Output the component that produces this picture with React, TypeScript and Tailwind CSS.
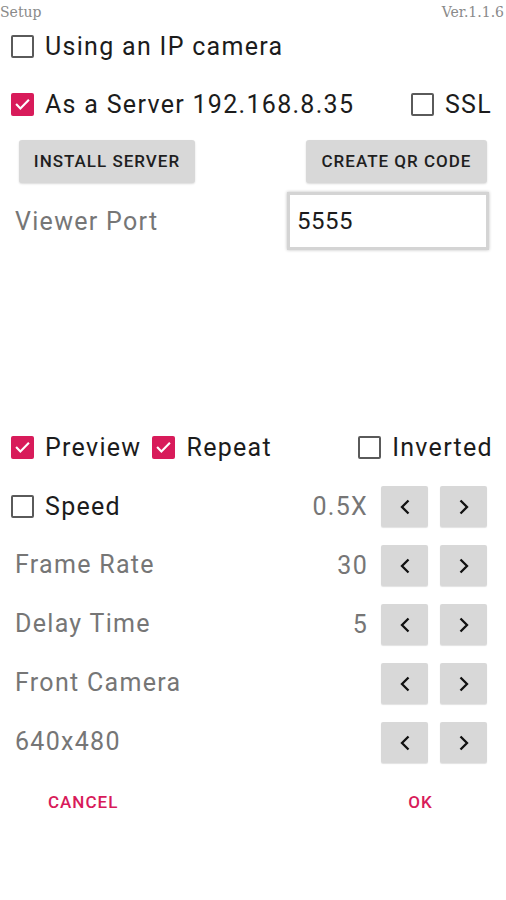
import React from "react";

const PINK = "bg-[#d81b5a]";

function Box({ checked }: { checked?: boolean }) {
  if (checked) {
    return (
      <span className={`flex h-[23px] w-[23px] shrink-0 items-center justify-center rounded-[2px] ${PINK}`}>
        <svg width="17" height="17" viewBox="0 0 24 24" fill="none">
          <path d="M4 12.5l5 5L20 6.5" stroke="#fff" strokeWidth="3" strokeLinecap="square" />
        </svg>
      </span>
    );
  }
  return <span className="h-[23px] w-[23px] shrink-0 rounded-[2px] border-2 border-[#5a5a5a]" />;
}

function Check({ label, checked }: { label: string; checked?: boolean }) {
  return (
    <div className="flex items-center gap-[11px]">
      <Box checked={checked} />
      <span className="text-[25px] leading-none tracking-[1.3px] text-[#1c1c1c]">{label}</span>
    </div>
  );
}

function Arrow({ dir }: { dir: "l" | "r" }) {
  return (
    <button className="flex h-[41px] w-[47px] items-center justify-center rounded-[2px] bg-[#d8d8d8] shadow-[0_1px_1px_rgba(0,0,0,0.12)]">
      <svg width="12" height="18" viewBox="0 0 12 18" fill="none">
        <path
          d={dir === "l" ? "M9.5 2.5L3 9l6.5 6.5" : "M2.5 2.5L9 9l-6.5 6.5"}
          stroke="#111"
          strokeWidth="2.3"
        />
      </svg>
    </button>
  );
}

function Stepper({ label, value, check }: { label: string; value?: string; check?: boolean }) {
  return (
    <div className="flex h-[59px] items-center">
      <div className="flex-1">
        {check ? (
          <Check label={label} />
        ) : (
          <span className="pl-[4px] text-[25px] leading-none tracking-[1.3px] text-[#767676]">{label}</span>
        )}
      </div>
      <span className="mr-[13px] text-[25px] leading-none tracking-[1.3px] text-[#767676]">{value}</span>
      <div className="flex gap-[12px]">
        <Arrow dir="l" />
        <Arrow dir="r" />
      </div>
    </div>
  );
}

export default function App() {
  return (
    <div
      className="h-[900px] w-[506px] bg-white pr-[19px] pl-[11px]"
      style={{ fontFamily: "Roboto, 'Noto Sans', sans-serif" }}
    >
      <div className="-mr-[17px] -ml-[11px] flex h-[24px] items-center justify-between text-[14px] text-[#8a8a8a] [font-family:'DejaVu_Serif',serif]">
        <span>Setup</span>
        <span>Ver.1.1.6</span>
      </div>

      <div className="flex h-[45px] items-center">
        <Check label="Using an IP camera" />
      </div>

      <div className="mt-[13px] flex h-[45px] items-center justify-between">
        <Check label="As a Server 192.168.8.35" checked />
        <div className="-mr-[5px]">
          <Check label="SSL" />
        </div>
      </div>

      <div className="mt-[13px] flex items-center justify-between pl-[8px]">
        <button className="h-[43px] w-[176px] rounded-[3px] bg-[#d8d8d8] text-[17px] font-medium tracking-[1px] text-[#1f1f1f] shadow-[0_1px_2px_rgba(0,0,0,0.15)]">
          INSTALL SERVER
        </button>
        <button className="h-[43px] w-[181px] rounded-[3px] bg-[#d8d8d8] text-[17px] font-medium tracking-[1px] text-[#1f1f1f] shadow-[0_1px_2px_rgba(0,0,0,0.15)]">
          CREATE QR CODE
        </button>
      </div>

      <div className="mt-[9px] flex h-[58px] items-center justify-between">
        <span className="pl-[4px] text-[25px] leading-none tracking-[1.3px] text-[#767676]">Viewer Port</span>
        <div className="-mr-[2px] flex h-[58px] w-[202px] items-center border-[3px] border-[#d4d4d4] bg-white pl-[7px] text-[24px] tracking-[0.5px] text-[#1c1c1c] shadow-[0_0_3px_rgba(0,0,0,0.25)]">
          5555
        </div>
      </div>

      <div className="mt-[175px] flex h-[45px] items-center justify-between">
        <div className="flex items-center gap-[11px]">
          <Check label="Preview" checked />
          <Check label="Repeat" checked />
        </div>
        <div className="-mr-[6px]">
          <Check label="Inverted" />
        </div>
      </div>

      <div className="mt-[7px]">
        <Stepper label="Speed" value="0.5X" check />
        <Stepper label="Frame Rate" value="30" />
        <Stepper label="Delay Time" value="5" />
        <Stepper label="Front Camera" />
        <Stepper label="640x480" />
      </div>

      <div className="mt-[9px] flex h-[44px] items-center text-[17px] font-medium tracking-[1px] text-[#d81b5a]">
        <span className="ml-[37px]">CANCEL</span>
        <span className="ml-[290px]">OK</span>
      </div>
    </div>
  );
}
